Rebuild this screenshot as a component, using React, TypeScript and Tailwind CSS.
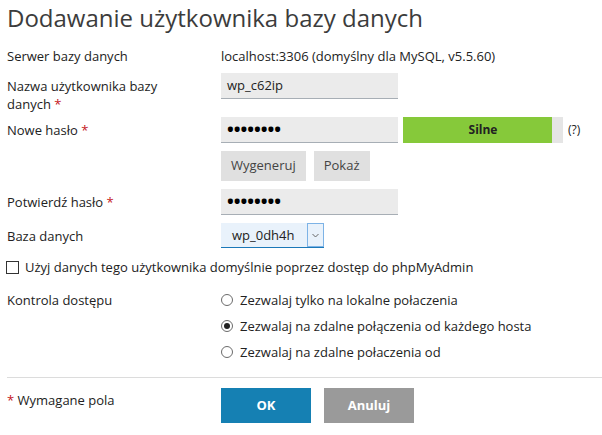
import React, { useState } from 'react';

const Req = () => <span className="text-[#c4161c]">*</span>;

const Radio = ({ checked, label, onClick }: { checked: boolean; label: string; onClick: () => void }) => (
  <label onClick={onClick} className="flex items-center gap-[7px] cursor-pointer">
    <span className="w-[12px] h-[12px] rounded-full border border-[#6b6b6b] bg-white flex items-center justify-center">
      {checked && <span className="w-[6px] h-[6px] rounded-full bg-[#222]" />}
    </span>
    <span className="leading-[18px]">{label}</span>
  </label>
);

const App = () => {
  const [access, setAccess] = useState(1);
  const [useDefault, setUseDefault] = useState(false);

  return (
    <div className="font-['Open_Sans',sans-serif] text-[13px] text-[#222] pl-[7px] pt-[2px] bg-white min-h-screen">
      <h1 className="text-[24px] leading-[32px] text-[#3c3c3c]">Dodawanie użytkownika bazy danych</h1>

      <div className="flex mt-[13px]">
        <div className="w-[214px] leading-[18px]">Serwer bazy danych</div>
        <div className="leading-[18px]">localhost:3306 (domyślny dla MySQL, v5.5.60)</div>
      </div>

      <div className="flex mt-[8px]">
        <div className="w-[214px] pr-[24px] pt-[4px] leading-[18px]">
          Nazwa użytkownika bazy danych&nbsp;<Req />
        </div>
        <div className="w-[177px] h-[26px] bg-[#ebebeb] border-b border-[#a7aeb5] px-[6px] leading-[25px]">wp_c62ip</div>
      </div>

      <div className="flex mt-[4px]">
        <div className="w-[214px] pt-[4px] leading-[18px]">
          Nowe hasło <Req />
        </div>
        <div className="flex flex-col gap-[8px]">
          <div className="flex items-center gap-[5px]">
            <div className="w-[177px] h-[26px] bg-[#ebebeb] border-b border-[#a7aeb5] px-[6px] leading-[25px] text-[18px] font-bold text-black overflow-hidden">
              ••••••••
            </div>
            <div className="relative w-[160px] h-[26px] bg-[#e5e5e5]">
              <div className="absolute left-0 top-0 h-full w-[149px] bg-[#86c93a]" />
              <div className="relative text-center leading-[26px] font-bold text-[12px]">Silne</div>
            </div>
            <span className="text-[12px]">(?)</span>
          </div>
          <div className="flex gap-[8px]">
            <button className="h-[30px] px-[10px] bg-[#e0e0e0] text-[#444]">Wygeneruj</button>
            <button className="h-[30px] px-[10px] bg-[#e0e0e0] text-[#444]">Pokaż</button>
          </div>
        </div>
      </div>

      <div className="flex mt-[8px]">
        <div className="w-[214px] pt-[4px] leading-[18px]">
          Potwierdź hasło <Req />
        </div>
        <div className="w-[177px] h-[26px] bg-[#ebebeb] border-b border-[#a7aeb5] px-[6px] leading-[25px] text-[18px] font-bold text-black overflow-hidden">
          ••••••••
        </div>
      </div>

      <div className="flex mt-[8px]">
        <div className="w-[214px] pt-[4px] leading-[18px]">Baza danych</div>
        <div className="flex w-[103px] h-[25px] bg-[#e9f2fb] border-b border-[#1b78b8]">
          <div className="flex-1 pl-[11px] leading-[24px]">wp_0dh4h</div>
          <div className="w-[17px] border border-[#7db3e6] flex items-center justify-center">
            <svg width="7" height="5" viewBox="0 0 7 5">
              <path d="M0.5 1 L3.5 4 L6.5 1" fill="none" stroke="#666" strokeWidth="1" />
            </svg>
          </div>
        </div>
      </div>

      <label onClick={() => setUseDefault(!useDefault)} className="flex items-center gap-[6px] mt-[10px] -ml-[1px] cursor-pointer">
        <span className="w-[13px] h-[13px] border border-[#333] bg-white flex items-center justify-center">
          {useDefault && <span className="w-[7px] h-[7px] bg-[#222]" />}
        </span>
        <span className="leading-[18px]">Użyj danych tego użytkownika domyślnie poprzez dostęp do phpMyAdmin</span>
      </label>

      <div className="flex mt-[15px]">
        <div className="w-[214px] leading-[18px]">Kontrola dostępu</div>
        <div className="flex flex-col gap-[8px]">
          <Radio checked={access === 0} onClick={() => setAccess(0)} label="Zezwalaj tylko na lokalne połaczenia" />
          <Radio checked={access === 1} onClick={() => setAccess(1)} label="Zezwalaj na zdalne połączenia od każdego hosta" />
          <Radio checked={access === 2} onClick={() => setAccess(2)} label="Zezwalaj na zdalne połaczenia od" />
        </div>
      </div>

      <div className="border-t border-[#dcdcdc] mt-[16px]" />

      <div className="flex mt-[10px]">
        <div className="w-[214px] pt-[3px] leading-[18px]">
          <Req /> Wymagane pola
        </div>
        <div className="flex gap-[13px]">
          <button className="w-[90px] h-[35px] bg-[#1580b3] text-white font-bold">OK</button>
          <button className="w-[90px] h-[35px] bg-[#9a9a9a] text-white font-bold">Anuluj</button>
        </div>
      </div>
    </div>
  );
};

export default App;
